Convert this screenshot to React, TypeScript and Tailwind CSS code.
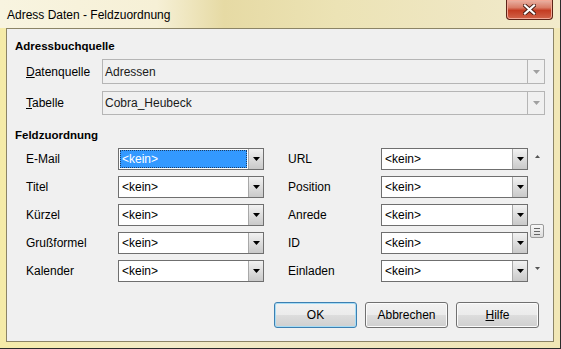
import React from "react";

const font = { fontFamily: '"Liberation Sans", Arial, sans-serif' };

const Arrow: React.FC<{ color?: string }> = ({ color = "#000" }) => (
  <svg width="7" height="4" viewBox="0 0 7 4">
    <path d="M0 0 H7 L3.5 4 Z" fill={color} />
  </svg>
);

const DisabledCombo: React.FC<{ value: string; tall?: boolean }> = ({
  value,
  tall,
}) => (
  <div
    className={`flex ${
      tall ? "h-[25px]" : "h-[24px]"
    } w-[443px] border border-[#b5b5b5] bg-[#f0f0f0]`}
  >
    <div className="flex flex-1 items-center pl-[2px] text-[12px] text-[#1a1a1a]">
      {value}
    </div>
    <div className="flex w-[17px] items-center justify-center border-l border-[#b5b5b5]">
      <Arrow color="#a0a0a0" />
    </div>
  </div>
);

const FieldCombo: React.FC<{ w: string; selected?: boolean }> = ({
  w,
  selected,
}) => (
  <div className={`flex h-[22px] ${w} border border-[#6f6f6f] bg-white`}>
    <div className="flex flex-1 p-[1px]">
      {selected ? (
        <div className="flex flex-1 items-center border border-dotted border-[#1c3f66] bg-[#3399ff] pl-[1px] text-[12px] text-white">
          &lt;kein&gt;
        </div>
      ) : (
        <div className="flex flex-1 items-center pl-[2px] text-[12px] text-black">
          &lt;kein&gt;
        </div>
      )}
    </div>
    <div className="flex w-[15px] items-center justify-center border-l border-[#a8a8a8] bg-gradient-to-b from-[#f2f2f2] to-[#c9c9c9]">
      <Arrow />
    </div>
  </div>
);

const rows = [
  ["E-Mail", "URL"],
  ["Titel", "Position"],
  ["Kürzel", "Anrede"],
  ["Grußformel", "ID"],
  ["Kalender", "Einladen"],
];

const Btn: React.FC<{ children: React.ReactNode; focus?: boolean }> = ({
  children,
  focus,
}) => (
  <div
    className={`flex h-[26px] w-[83px] items-center justify-center rounded-[3px] border text-[12px] text-black ${
      focus
        ? "border-[#3c7fb1] shadow-[inset_0_0_0_1px_#a6dcf5]"
        : "border-[#707070] shadow-[inset_0_0_0_1px_#fbfbfb]"
    } bg-[linear-gradient(to_bottom,#f2f2f2_0%,#ebebeb_50%,#dddddd_51%,#cfcfcf_100%)]`}
  >
    {children}
  </div>
);

export default function App() {
  return (
    <div
      style={font}
      className="flex h-[349px] w-[561px] flex-col border-b border-r border-[#2b2b2b] bg-[linear-gradient(to_right,#f5eba8,#f2ebc8_30%,#efe6bd_70%,#f1e7b6)]"
    >
      {/* title bar */}
      <div className="flex h-[28px] bg-[linear-gradient(to_right,#f8f4e0_0%,#f6f0d6_28%,#e6daa4_40%,#ece3b5_60%,#efe7c4_85%,#f2ebcb_100%)]">
        <div className="flex-1 pl-[7px] pt-[7px] text-[12px] leading-[16px] text-black">
          Adress Daten - Feldzuordnung
        </div>
        <div className="mr-[7px] flex h-[20px] w-[47px] items-center justify-center rounded-b-[4px] border border-t-0 border-[#5c2418] bg-[linear-gradient(to_bottom,#eab4a6_0%,#d97c66_40%,#c43c22_55%,#d2644a_100%)] shadow-[inset_0_0_0_1px_#f2a896]">
          <svg width="13" height="11" viewBox="0 0 13 11">
            <path
              d="M2 1.5 L11 9.5 M11 1.5 L2 9.5"
              stroke="#4a1e14"
              strokeWidth="4"
              strokeLinecap="square"
            />
            <path
              d="M2 1.5 L11 9.5 M11 1.5 L2 9.5"
              stroke="#ffffff"
              strokeWidth="2.2"
              strokeLinecap="square"
            />
          </svg>
        </div>
      </div>

      {/* client area */}
      <div className="mx-[6px] flex h-[314px] flex-col border border-[#8b8466] bg-[#f0f0f0] px-[8px] text-black">
        <div className="mt-[9px] h-[16px] text-[11.5px] font-bold leading-[16px]">
          Adressbuchquelle
        </div>
        <div className="mt-[5px] flex items-center">
          <div className="w-[87px] pl-[11px] text-[12px]">
            <span className="underline">D</span>atenquelle
          </div>
          <DisabledCombo value="Adressen" tall />
        </div>
        <div className="mt-[7px] flex items-center">
          <div className="w-[87px] pl-[11px] text-[12px]">
            <span className="underline">T</span>abelle
          </div>
          <DisabledCombo value="Cobra_Heubeck" />
        </div>

        <div className="mt-[12px] h-[16px] text-[11.5px] font-bold leading-[16px]">
          Feldzuordnung
        </div>

        <div className="mt-[5px] flex">
          <div className="flex flex-col gap-[6px]">
            {rows.map(([l, r], i) => (
              <div key={l} className="flex items-center text-[12px]">
                <div className="w-[103px] pl-[11px]">{l}</div>
                <FieldCombo w="w-[146px]" selected={i === 0} />
                <div className="ml-[24px] w-[93px]">{r}</div>
                <FieldCombo w="w-[147px]" />
              </div>
            ))}
          </div>
          <div className="ml-[2px] flex w-[14px] flex-col items-center">
            <div className="mt-[7px]">
              <svg width="5" height="3" viewBox="0 0 5 3">
                <path d="M0 3 L2.5 0 L5 3 Z" fill="#555" />
              </svg>
            </div>
            <div className="mt-[66px] flex h-[14px] w-[14px] flex-col items-center justify-center gap-[2px] rounded-[2px] border border-[#9a9a9a] bg-gradient-to-b from-[#f8f8f8] to-[#dcdcdc]">
              <div className="h-px w-[6px] bg-[#666]" />
              <div className="h-px w-[6px] bg-[#666]" />
              <div className="h-px w-[6px] bg-[#666]" />
            </div>
            <div className="mt-[29px]">
              <svg width="5" height="3" viewBox="0 0 5 3">
                <path d="M0 0 L5 0 L2.5 3 Z" fill="#555" />
              </svg>
            </div>
          </div>
        </div>

        <div className="mt-[20px] flex justify-end gap-[8px] pr-[6px]">
          <Btn focus>OK</Btn>
          <Btn>Abbrechen</Btn>
          <Btn>
            <span className="underline">H</span>ilfe
          </Btn>
        </div>
      </div>
    </div>
  );
}
